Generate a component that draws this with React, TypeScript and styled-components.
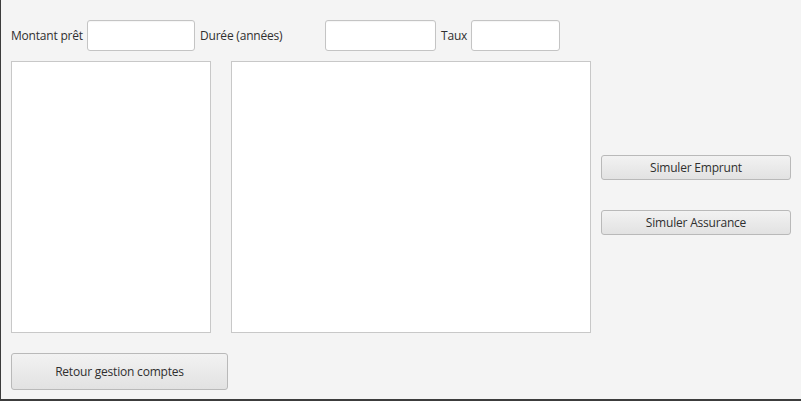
import React from "react";
import styled, { createGlobalStyle } from "styled-components";

const Global = createGlobalStyle`
  html, body { margin: 0; padding: 0; background: #f4f4f4; }
  body { font-family: "Open Sans", "Noto Sans", sans-serif; }
`;

const Window = styled.div`
  box-sizing: border-box;
  width: 801px;
  height: 401px;
  background: #f4f4f4;
  border-left: 1px solid #3c3c3c;
  border-bottom: 2px solid #3c3c3c;
  padding: 20px 10px 0 10px;
  display: flex;
  flex-direction: column;
  color: #2f2f2f;
  font-size: 12px;
`;

const TopRow = styled.div`
  display: flex;
  align-items: center;
  gap: 5px;
  height: 31px;
`;

const Label = styled.span<{ $w: number }>`
  width: ${(p) => p.$w}px;
  white-space: nowrap;
  font-size: 12px;
  letter-spacing: -0.2px;
`;

const Field = styled.input<{ $w: number }>`
  box-sizing: border-box;
  width: ${(p) => p.$w}px;
  height: 31px;
  border: 1px solid #c4c4c4;
  border-radius: 3px;
  background: #ffffff;
  outline: none;
  padding: 0 6px;
  box-shadow: inset 0 1px 1px rgba(0, 0, 0, 0.04);
`;

const MiddleRow = styled.div`
  display: flex;
  margin-top: 10px;
  height: 272px;
`;

const Panel = styled.div<{ $w: number; $ml?: number }>`
  box-sizing: border-box;
  width: ${(p) => p.$w}px;
  margin-left: ${(p) => p.$ml ?? 0}px;
  height: 100%;
  background: #ffffff;
  border: 1px solid #c8c8c8;
`;

const Side = styled.div`
  display: flex;
  flex-direction: column;
  gap: 30px;
  margin-left: 10px;
  padding-top: 94px;
`;

const Button = styled.button<{ $w: number; $h: number }>`
  box-sizing: border-box;
  width: ${(p) => p.$w}px;
  height: ${(p) => p.$h}px;
  border: 1px solid #b9b9b9;
  border-radius: 3px;
  background: linear-gradient(#f2f2f2, #e2e2e2);
  color: #2f2f2f;
  font-family: "Open Sans", "Noto Sans", sans-serif;
  font-size: 12px;
  letter-spacing: -0.2px;
  padding: 0;
  cursor: pointer;
`;

const BottomRow = styled.div`
  display: flex;
  margin-top: 20px;
`;

export default function App() {
  return (
    <>
      <Global />
      <Window>
        <TopRow>
          <Label $w={71}>Montant prêt</Label>
          <Field $w={108} />
          <Label $w={120}>Durée (années)</Label>
          <Field $w={111} />
          <Label $w={25}>Taux</Label>
          <Field $w={89} />
        </TopRow>
        <MiddleRow>
          <Panel $w={200} />
          <Panel $w={360} $ml={20} />
          <Side>
            <Button $w={190} $h={25}>Simuler Emprunt</Button>
            <Button $w={190} $h={25}>Simuler Assurance</Button>
          </Side>
        </MiddleRow>
        <BottomRow>
          <Button $w={217} $h={37}>Retour gestion comptes</Button>
        </BottomRow>
      </Window>
    </>
  );
}
